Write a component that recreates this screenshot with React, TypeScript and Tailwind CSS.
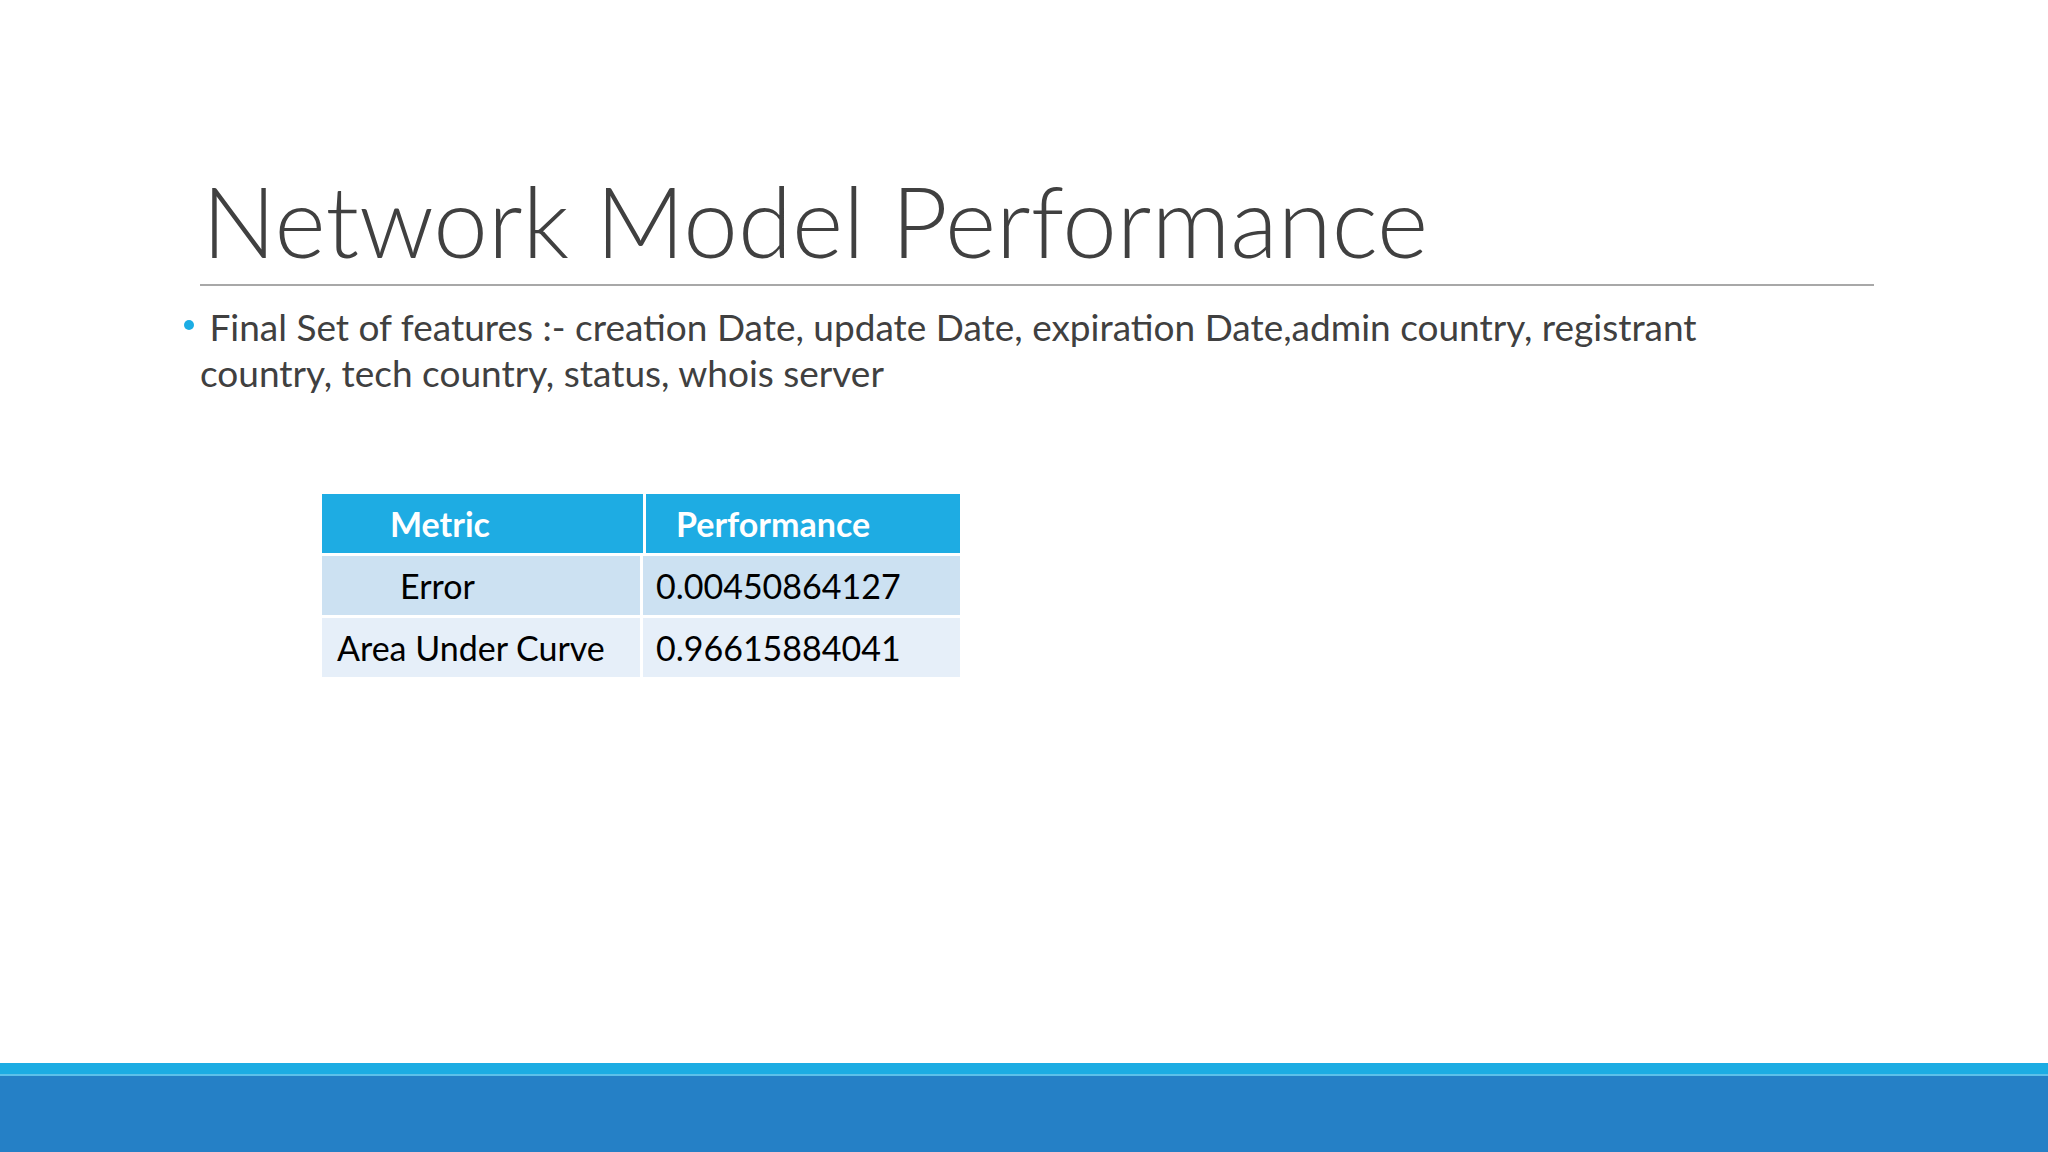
export default function App() {
  const rows = [
    { metric: "Error", value: "0.00450864127", bg: "bg-[#cce1f2]", pad: "pl-[78px]" },
    { metric: "Area Under Curve", value: "0.96615884041", bg: "bg-[#e6eff9]", pad: "pl-[15px]" },
  ];
  return (
    <div className="w-[2048px] h-[1152px] bg-white flex flex-col overflow-hidden" style={{ fontFamily: "Lato, 'Open Sans', sans-serif" }}>
      <div className="flex-1 pl-[200px] pr-[174px] pt-[160px]">
        <h1 className="pl-[2px] text-[98px] leading-[120px] font-light text-[#404040]">Network Model Performance</h1>
        <div className="mt-[4px] h-[2px] bg-[#a8a8a8]" />
        <div className="mt-[18px] flex text-[37px] leading-[46px] text-[#404040] pr-[60px]">
          <p className="relative">
            <span className="absolute -left-[16px] top-[16px] w-[10px] h-[10px] rounded-full bg-[#1cade4]" />
            &nbsp;Final Set of features :- creation Date, update Date, expiration Date,admin country, registrant country, tech country, status, whois server
          </p>
        </div>
        <div className="mt-[98px] ml-[122px] w-[638px] flex flex-col gap-[3px] text-[34px] text-black">
          <div className="flex gap-[3px] h-[59px] bg-[#1eace3] text-white font-bold items-center">
            <div className="w-[318px] pl-[68px]">Metric</div>
            <div className="flex-1 border-l-[3px] border-white h-full flex items-center pl-[30px]">Performance</div>
          </div>
          {rows.map((r) => (
            <div key={r.metric} className="flex gap-[3px] h-[59px]">
              <div className={`w-[318px] ${r.bg} ${r.pad} flex items-center`}>{r.metric}</div>
              <div className={`flex-1 ${r.bg} flex items-center pl-[13px]`}>{r.value}</div>
            </div>
          ))}
        </div>
      </div>
      <div className="h-[11px] bg-[#1cace3]" />
      <div className="h-[2px] bg-[#5cc0ea]" />
      <div className="h-[76px] bg-[#2580c6]" />
    </div>
  );
}
